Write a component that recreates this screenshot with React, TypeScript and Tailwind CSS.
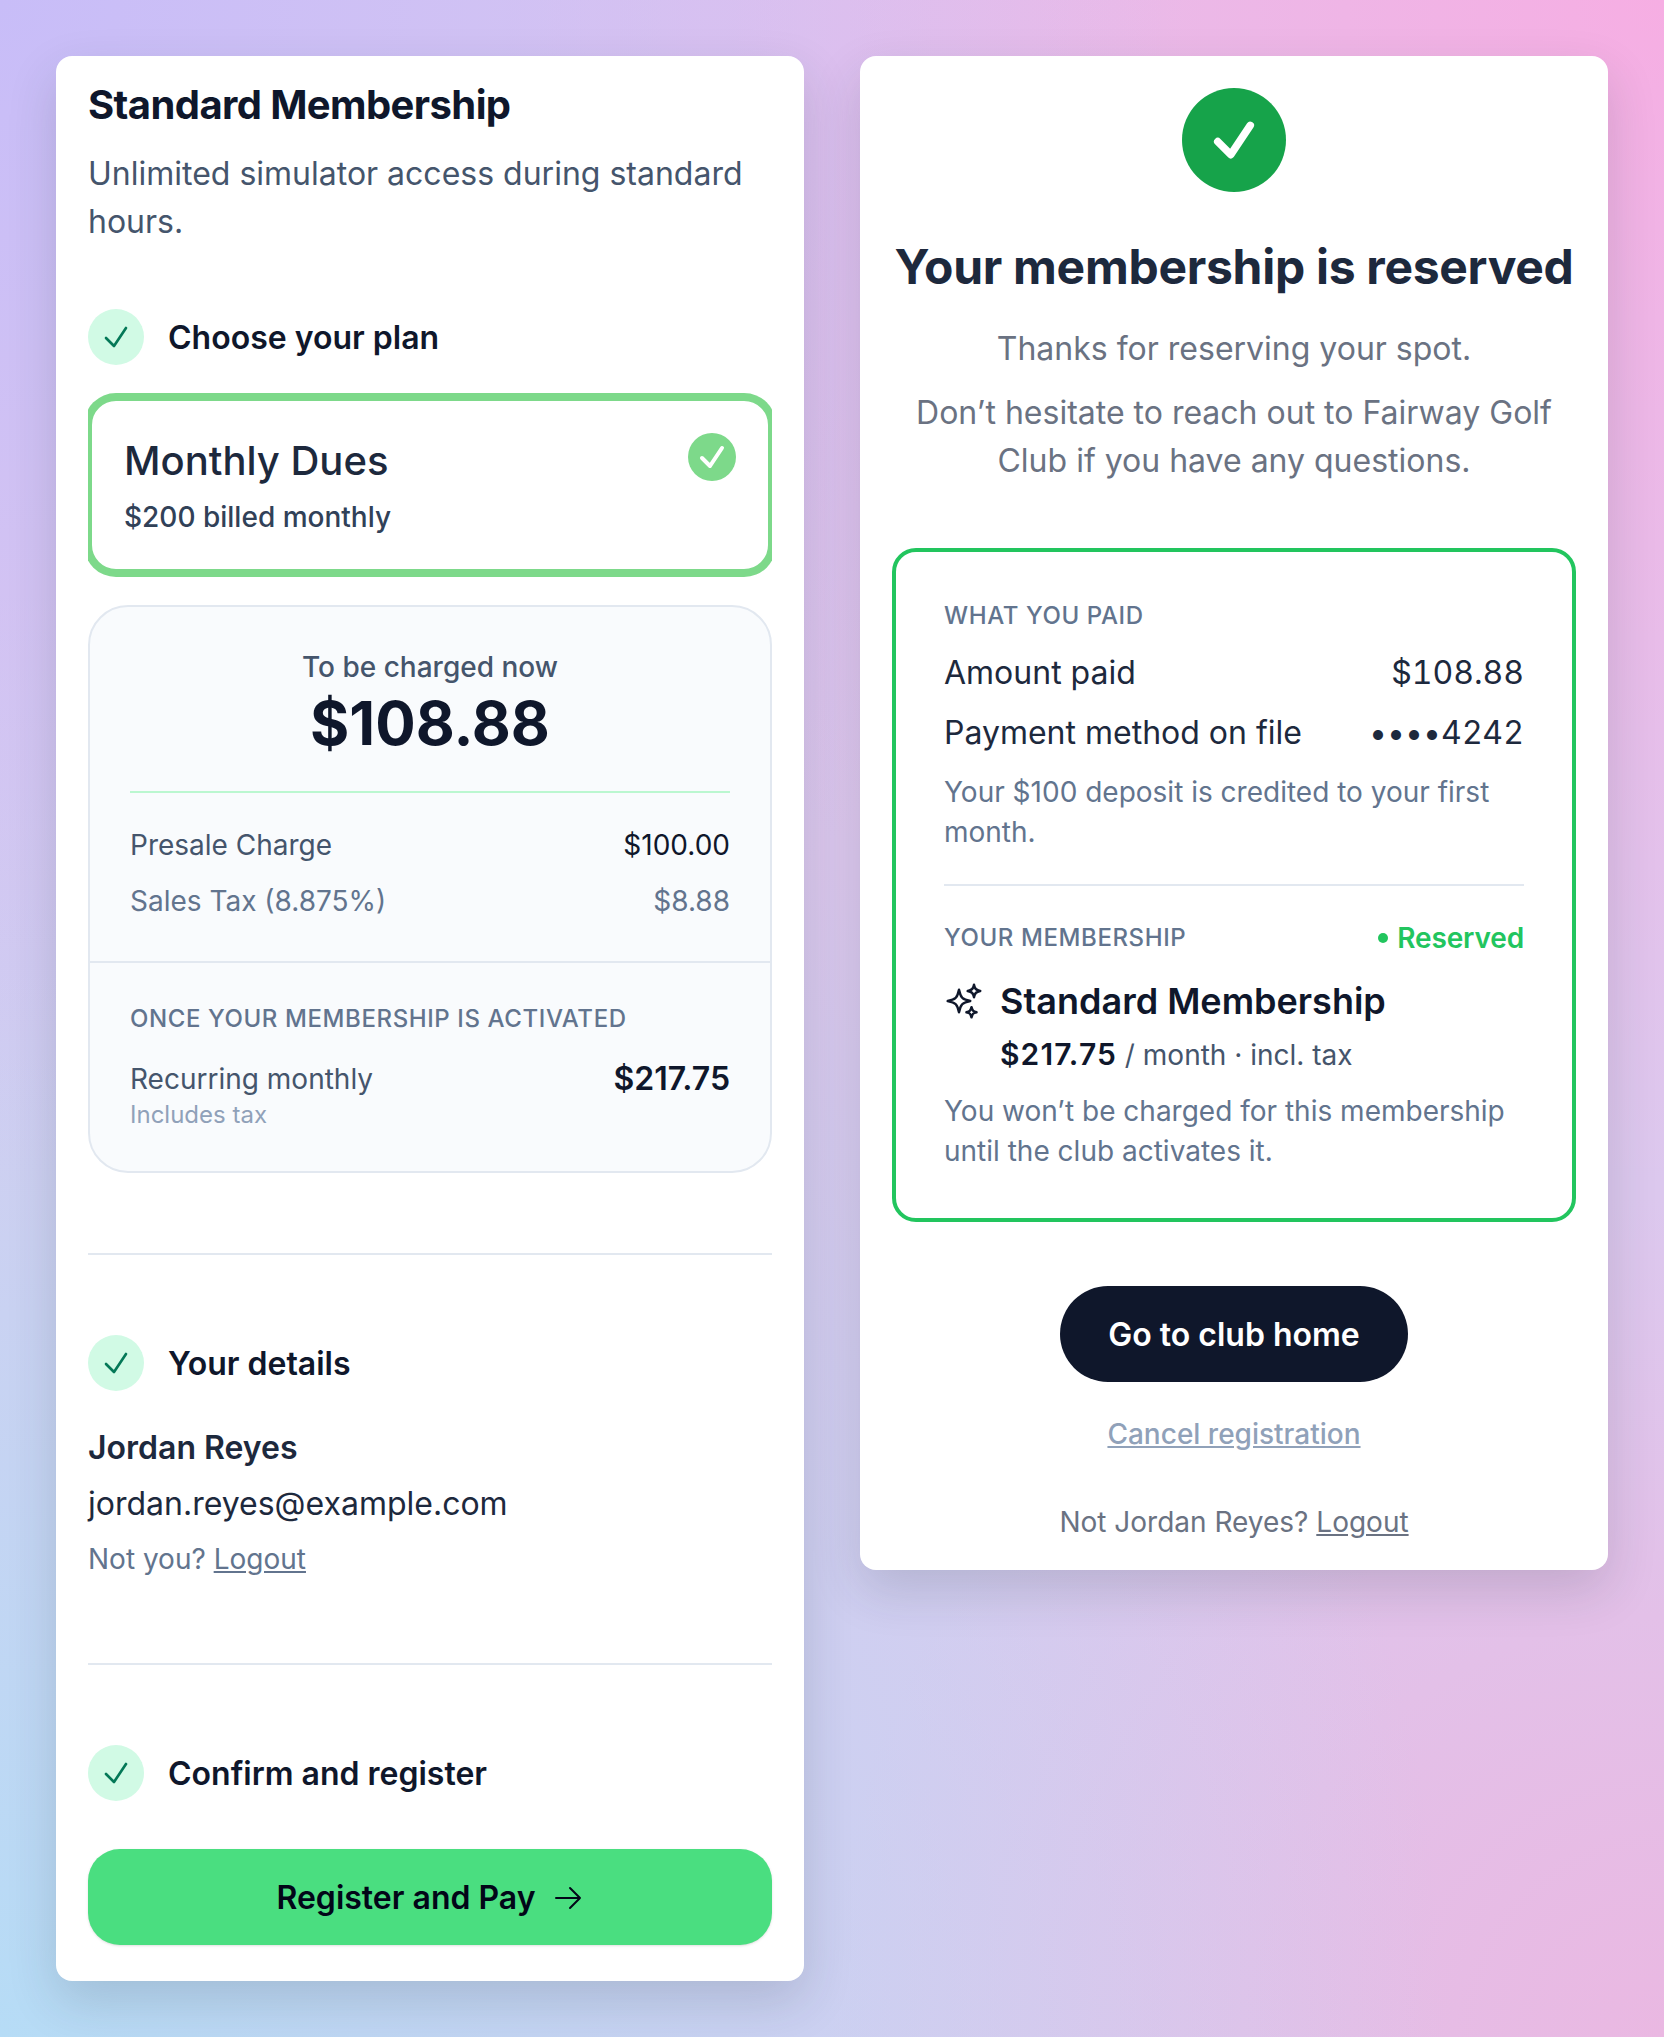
import { HiOutlineArrowRight, HiOutlineCheck, HiOutlineSparkles } from 'react-icons/hi2';

function StepHeader({ title }: { title: string }) {
  return (
    <div className="flex items-center gap-6">
      <div className="flex h-14 w-14 items-center justify-center rounded-full bg-[#d1fae5]">
        <HiOutlineCheck className="h-8 w-8 text-[#047857]" strokeWidth={2} />
      </div>
      <h2 className="pt-[2px] text-[32px] leading-[48px] font-semibold text-slate-900">{title}</h2>
    </div>
  );
}

function PlanCard() {
  return (
    <div className="mt-7 overflow-x-clip py-1">
      <div className="relative h-[176px] rounded-[28px] border-4 border-[#7dd98a] bg-white px-8 pt-8 shadow-[0_0_0_4px_#7dd98a]">
        <div className="text-[40px] leading-[56px] font-medium text-slate-800">Monthly Dues</div>
        <div className="mt-2 text-[28px] leading-10 font-medium text-slate-700">$200 billed monthly</div>
        <div className="absolute top-8 right-8 flex h-12 w-12 items-center justify-center rounded-full bg-[#7dd98a]">
          <HiOutlineCheck className="h-8 w-8 text-white" strokeWidth={3} />
        </div>
      </div>
    </div>
  );
}

function ChargeSummary() {
  return (
    <div className="mt-7 rounded-[40px] border-2 border-slate-200 bg-[#f9fbfd]">
      <div className="px-10 pt-10 pb-10">
        <div className="text-center text-[28px] leading-10 font-medium text-slate-600">To be charged now</div>
        <div className="mt-1 text-center text-6xl leading-[64px] font-bold text-slate-900">$108.88</div>
        <div className="mt-9 border-t-2 border-[#bbf7d0] pt-8">
          <div className="flex justify-between text-[28px] leading-10">
            <span className="text-slate-600">Presale Charge</span>
            <span className="text-slate-900">$100.00</span>
          </div>
          <div className="mt-4 flex justify-between text-[28px] leading-10 text-slate-500">
            <span>Sales Tax (8.875%)</span>
            <span>$8.88</span>
          </div>
        </div>
      </div>
      <div className="border-t-2 border-slate-200 px-10 pt-10 pb-10">
        <div className="text-2xl leading-8 font-medium tracking-wide text-slate-500 uppercase">
          Once your membership is activated
        </div>
        <div className="mt-6 flex justify-between text-[28px] leading-10">
          <span className="text-slate-600">Recurring monthly</span>
          <span className="text-[32px] font-semibold text-slate-900">$217.75</span>
        </div>
        <div className="text-2xl leading-8 text-slate-400">Includes tax</div>
      </div>
    </div>
  );
}

function RegisterCard() {
  return (
    <div className="rounded-2xl bg-white px-8 pt-[25px] pb-9 shadow-[0_20px_50px_rgba(30,41,59,0.16)]">
      <h1 className="text-[40px] leading-[48px] font-bold tracking-[-0.015em] text-slate-900">Standard Membership</h1>
      <p className="mt-[21px] text-[32px] leading-[48px] text-slate-600">
        Unlimited simulator access during standard hours.
      </p>
      <div className="mt-[63px]">
        <StepHeader title="Choose your plan" />
      </div>
      <PlanCard />
      <ChargeSummary />
      <div className="mt-20 border-t-2 border-slate-200 pt-20">
        <StepHeader title="Your details" />
        <div className="mt-[37px] text-[32px] leading-10 font-semibold text-slate-800">Jordan Reyes</div>
        <div className="mt-3 text-[32px] leading-[48px] text-slate-800">jordan.reyes@example.com</div>
        <div className="mt-[11px] text-[28px] leading-10 text-slate-500">
          Not you? <a className="underline">Logout</a>
        </div>
      </div>
      <div className="mt-[84px] border-t-2 border-slate-200 pt-20">
        <StepHeader title="Confirm and register" />
        <button className="mt-12 flex h-24 w-full items-center justify-center gap-4 rounded-[32px] bg-[#4ade80] pt-[2px] text-[32px] font-semibold text-slate-950 shadow-sm">
          Register and Pay
          <HiOutlineArrowRight className="h-8 w-8" strokeWidth={1.5} />
        </button>
      </div>
    </div>
  );
}

function ReceiptBox() {
  return (
    <div className="mt-[63px] rounded-3xl border-4 border-[#22c55e] px-12 pt-12 pb-[47px]">
      <div className="text-2xl leading-8 font-medium tracking-wide text-slate-500 uppercase">What you paid</div>
      <div className="mt-[17px] flex justify-between text-[32px] leading-[48px] text-slate-800">
        <span>Amount paid</span>
        <span className="tabular-nums">$108.88</span>
      </div>
      <div className="mt-3 flex justify-between text-[32px] leading-[48px] text-slate-800">
        <span>Payment method on file</span>
        <span>
          ••••<span className="tracking-wide">4242</span>
        </span>
      </div>
      <p className="mt-[15px] text-[28px] leading-10 text-slate-500">
        Your $100 deposit is credited to your first month.
      </p>
      <div className="mt-8 border-t-2 border-slate-200 pt-8">
        <div className="flex items-center justify-between leading-10">
          <span className="text-2xl font-medium tracking-wide text-slate-500 uppercase">Your membership</span>
          <span className="flex items-center gap-[9px] text-[28px] font-semibold tracking-[-0.005em] text-[#22c55e]">
            <span className="h-[10px] w-[10px] rounded-full bg-[#22c55e]" />
            Reserved
          </span>
        </div>
        <div className="mt-[19px] flex items-center gap-4">
          <HiOutlineSparkles className="h-10 w-10 text-slate-900" strokeWidth={1.5} />
          <span className="text-4xl leading-[48px] font-semibold text-slate-900">Standard Membership</span>
        </div>
        <div className="mt-[9px] pl-14 text-[28px] leading-10 text-slate-600">
          <span className="text-[30px] font-semibold tracking-[0.037em] text-slate-900">$217.75</span> / month · incl. tax
        </div>
        <p className="mt-4 text-[28px] leading-10 text-slate-500">
          You won’t be charged for this membership until the club activates it.
        </p>
      </div>
    </div>
  );
}

function ConfirmationCard() {
  return (
    <div className="rounded-2xl bg-white px-8 pt-8 pb-7 shadow-[0_20px_50px_rgba(30,41,59,0.16)]">
      <div className="mx-auto flex h-[104px] w-[104px] items-center justify-center rounded-full bg-[#16a34a]">
        <HiOutlineCheck className="h-[52px] w-[52px] text-white" strokeWidth={3.5} />
      </div>
      <h1 className="mt-[45px] text-center text-5xl leading-[60px] font-bold tracking-[-0.006em] text-slate-800">
        Your membership is reserved
      </h1>
      <p className="mt-7 text-center text-[32px] leading-[48px] text-gray-500">Thanks for reserving your spot.</p>
      <p className="mt-4 text-center text-[32px] leading-[48px] text-gray-500">
        Don’t hesitate to reach out to Fairway Golf Club if you have any questions.
      </p>
      <ReceiptBox />
      <button className="mx-auto mt-16 block h-24 w-[348px] rounded-full bg-slate-900 pt-[2px] text-[32px] font-semibold text-white">
        Go to club home
      </button>
      <div className="mt-8 text-center text-[28px] leading-10 font-medium text-slate-400 underline">
        Cancel registration
      </div>
      <div className="mt-12 text-center text-[28px] leading-10 text-gray-500">
        Not Jordan Reyes? <a className="underline">Logout</a>
      </div>
    </div>
  );
}

export default function App() {
  return (
    <div className="grid min-h-screen grid-cols-2 items-start gap-14 bg-[#dcc8ee] bg-[radial-gradient(circle_at_0%_0%,#c8bdf8_0%,transparent_45%),radial-gradient(circle_at_100%_0%,#f6aee3_0%,transparent_45%),radial-gradient(circle_at_0%_100%,#b6dcf6_0%,transparent_55%),radial-gradient(circle_at_100%_100%,#eab8e2_0%,transparent_32%)] p-14 font-[Inter,sans-serif]">
      <RegisterCard />
      <ConfirmationCard />
    </div>
  );
}
